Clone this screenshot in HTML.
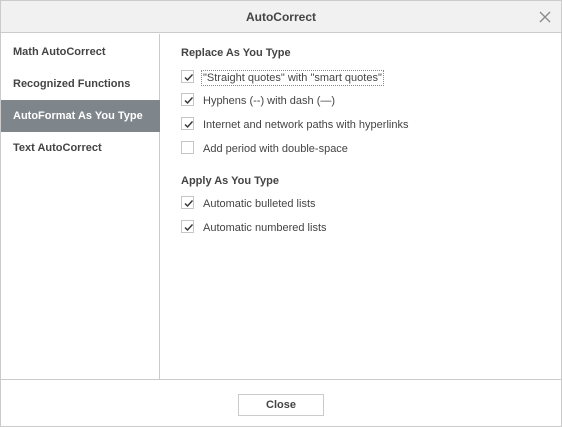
<!DOCTYPE html><html><head><style>
*{margin:0;padding:0;box-sizing:border-box}
body{width:562px;height:427px;background:#fff;font-family:"Liberation Sans",Arial,sans-serif;font-size:11px;color:#444;position:relative;overflow:hidden}
.frame{position:absolute;left:0;top:0;width:562px;height:427px;border:1px solid #cbcbcb}
.hdr{position:absolute;left:1px;top:1px;width:560px;height:32px;background:#f1f1f1;border-bottom:1px solid #cbcbcb;text-align:center;font-weight:bold;font-size:12px;line-height:32px;color:#444}
.side{position:absolute;left:1px;top:34px;width:159px;height:345px;border-right:1px solid #cbcbcb}
.it{position:absolute;left:12px;font-weight:bold;font-size:11px;color:#444}
.sel{position:absolute;left:0;top:66px;width:159px;height:32px;background:#7e858b}
.h{position:absolute;left:181px;font-weight:bold;font-size:11px;color:#444}
.cb{position:absolute;left:181px;width:13px;height:13px;border:1px solid #c6c6c6;background:#fff}
.cb svg{position:absolute;left:1px;top:1px}
.lb{position:absolute;left:203px;font-size:11px;color:#444}
.foot{position:absolute;left:1px;top:379px;width:560px;border-top:1px solid #cbcbcb}
.btn{position:absolute;left:238px;top:394px;width:86px;height:22px;border:1px solid #cbcbcb;background:#fff;text-align:center;line-height:21px;font-weight:bold;font-size:11px;color:#444}
</style></head><body>
<div class="frame"></div>
<div class="hdr">AutoCorrect</div>
<svg style="position:absolute;left:539px;top:11px" width="12" height="12"><path d="M1 1L11 11M11 1L1 11" stroke="#888" stroke-width="1.3"/></svg>
<div class="side">
<div class="sel"></div>
<div class="it" style="top:12px">Math AutoCorrect</div>
<div class="it" style="top:44px">Recognized Functions</div>
<div class="it" style="top:76px;color:#fff">AutoFormat As You Type</div>
<div class="it" style="top:108px">Text AutoCorrect</div>
</div>
<div class="h" style="top:47px">Replace As You Type</div>
<div class="cb" style="top:70px"><svg width="11" height="11"><path d="M2 5.5L4.5 8L9.5 2.5" stroke="#333" stroke-width="1.4" fill="none"/></svg></div>
<div class="lb" style="top:72px;outline:1px dotted #888;outline-offset:1px">"Straight quotes" with "smart quotes"</div>
<div class="cb" style="top:93px"><svg width="11" height="11"><path d="M2 5.5L4.5 8L9.5 2.5" stroke="#333" stroke-width="1.4" fill="none"/></svg></div>
<div class="lb" style="top:95px">Hyphens (--) with dash (—)</div>
<div class="cb" style="top:117px"><svg width="11" height="11"><path d="M2 5.5L4.5 8L9.5 2.5" stroke="#333" stroke-width="1.4" fill="none"/></svg></div>
<div class="lb" style="top:119px">Internet and network paths with hyperlinks</div>
<div class="cb" style="top:141px"></div>
<div class="lb" style="top:143px">Add period with double-space</div>
<div class="h" style="top:175px">Apply As You Type</div>
<div class="cb" style="top:196px"><svg width="11" height="11"><path d="M2 5.5L4.5 8L9.5 2.5" stroke="#333" stroke-width="1.4" fill="none"/></svg></div>
<div class="lb" style="top:198px">Automatic bulleted lists</div>
<div class="cb" style="top:220px"><svg width="11" height="11"><path d="M2 5.5L4.5 8L9.5 2.5" stroke="#333" stroke-width="1.4" fill="none"/></svg></div>
<div class="lb" style="top:222px">Automatic numbered lists</div>
<div class="foot"></div>
<div class="btn">Close</div>
</body></html>
